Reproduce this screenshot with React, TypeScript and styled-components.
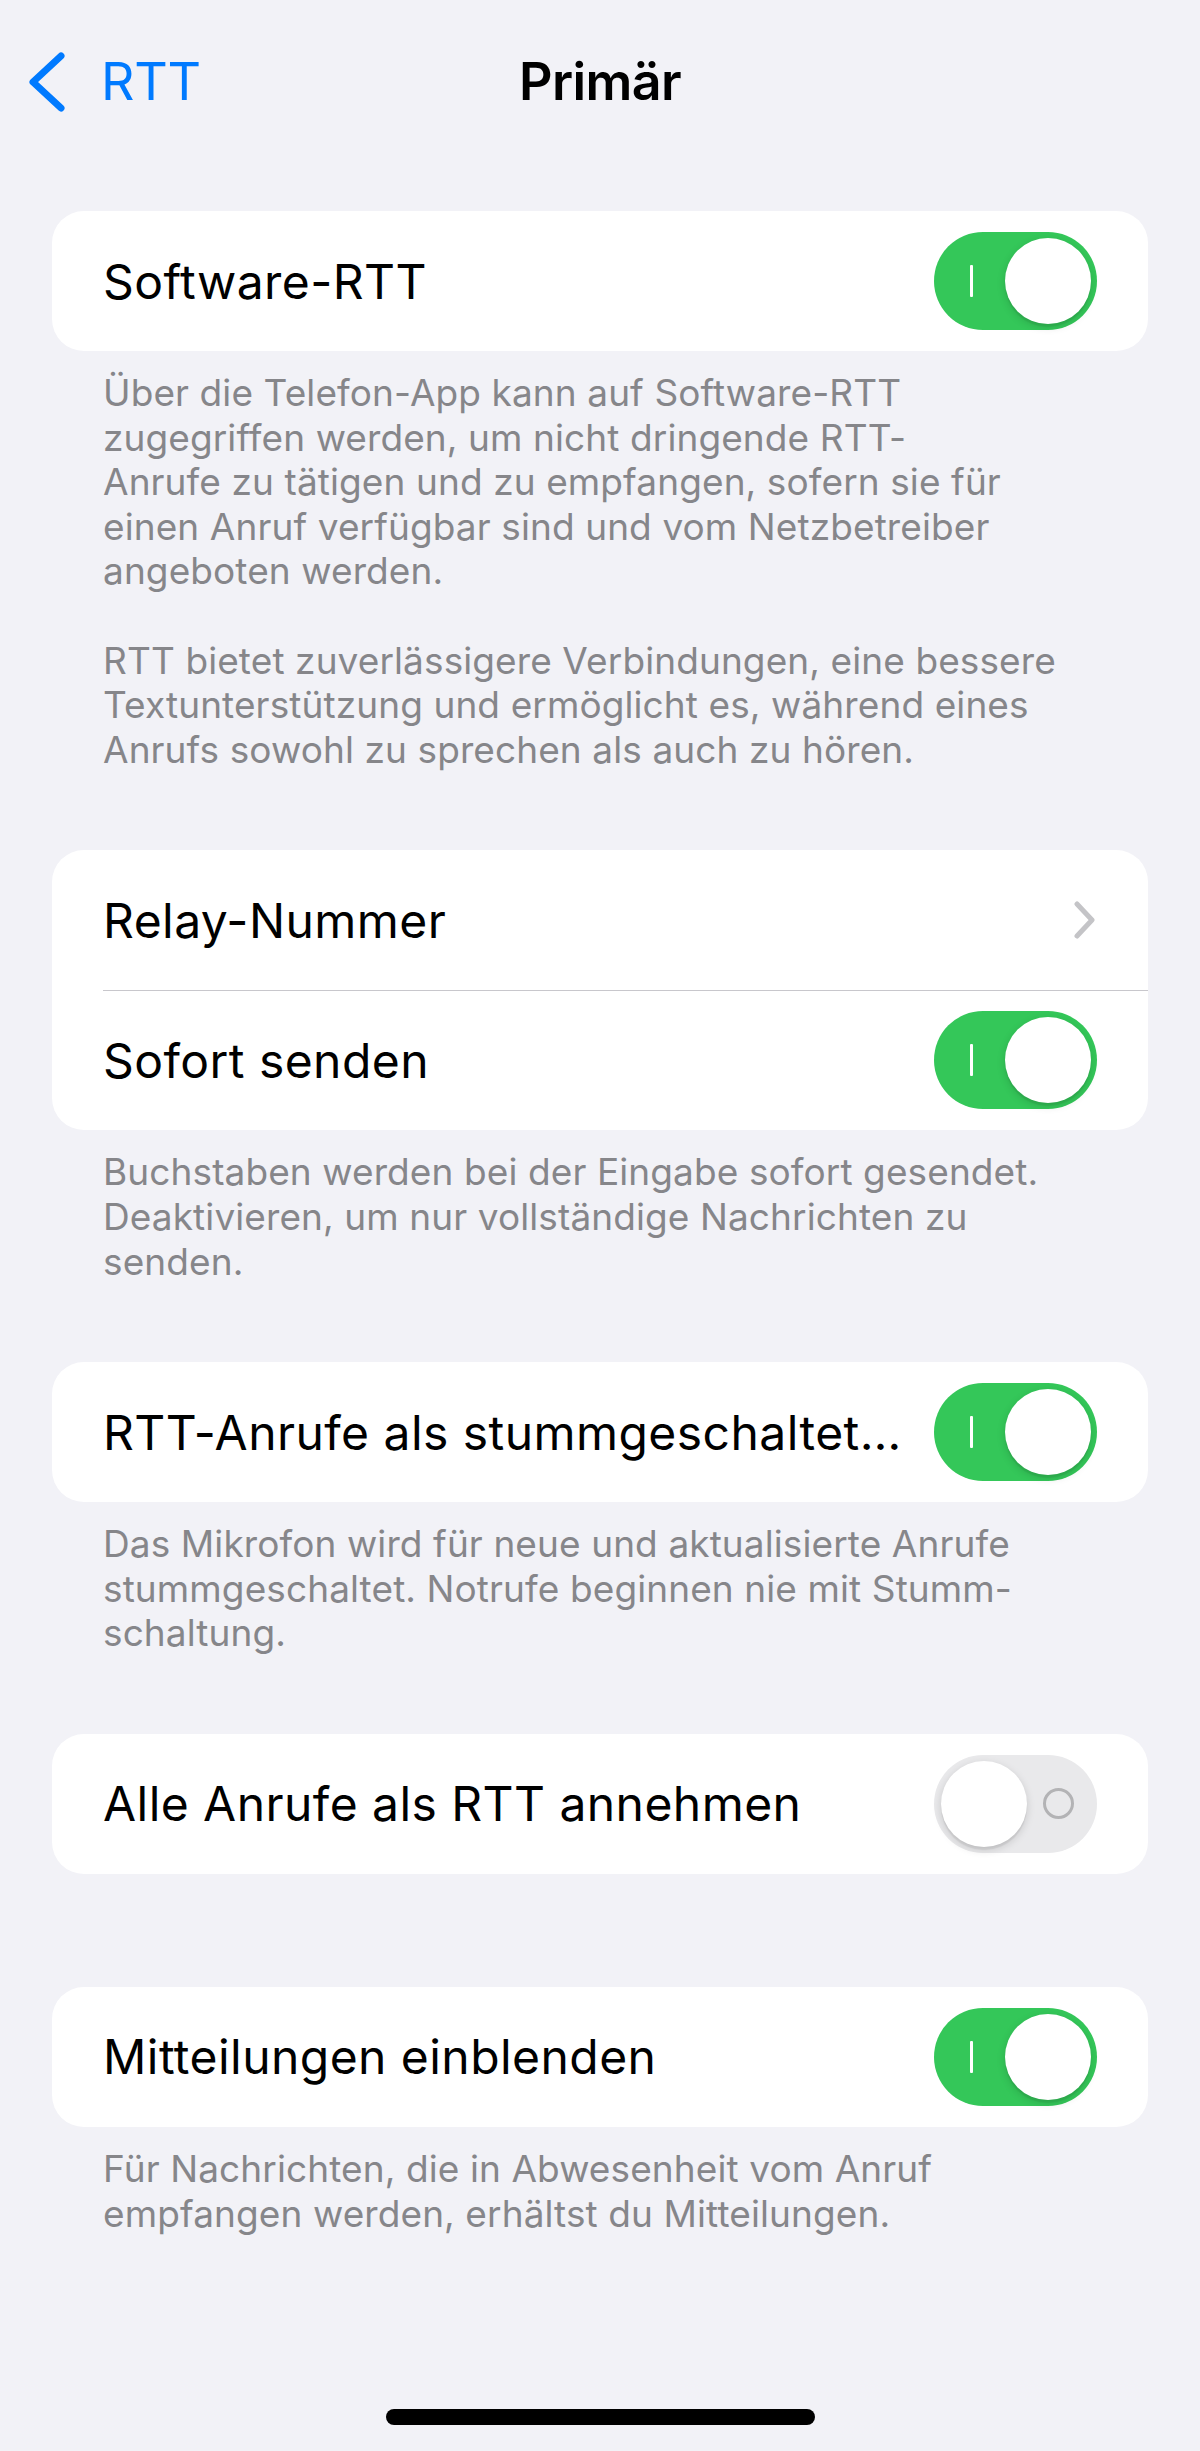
import React from "react";
import styled, { createGlobalStyle } from "styled-components";

const Global = createGlobalStyle`
  html, body { margin: 0; padding: 0; background: #f2f2f7; }
  body { font-family: Inter, "Noto Sans", "Liberation Sans", sans-serif; -webkit-font-smoothing: antialiased; }
  * { box-sizing: border-box; }
`;

const Page = styled.div`
  position: relative;
  min-height: 2451px;
  background: #f2f2f7;
  padding: 0 52px;
`;

const Nav = styled.header`
  height: 164px;
  display: grid;
  grid-template-columns: 1fr auto 1fr;
  align-items: center;
  margin: 0 -52px 47px;
`;

const Back = styled.button`
  justify-self: start;
  display: flex;
  align-items: center;
  gap: 33px;
  padding: 0 0 0 26px;
  border: 0;
  background: none;
  color: #007aff;
  font: 400 52px/1.21 Inter, sans-serif;
  letter-spacing: -0.3px;
`;

const Title = styled.h1`
  margin: 0;
  font: 600 52px/1.21 Inter, sans-serif;
  letter-spacing: -0.6px;
  color: #000;
`;

const Section = styled.section<{ $after: number }>`
  margin-bottom: ${(p) => p.$after}px;
`;

const Card = styled.div`
  background: #fff;
  border-radius: 32px;
  overflow: hidden;
`;

const Row = styled.div<{ $divider?: boolean }>`
  position: relative;
  height: 140px;
  display: flex;
  align-items: center;
  gap: 16px;
  padding: 0 51px;
  ${(p) =>
    p.$divider
      ? `&::before { content: ""; position: absolute; top: 0; left: 51px; right: 0; height: 1px; background: #c8c7cc; }`
      : ""}
`;

const Label = styled.span`
  flex: 1;
  min-width: 0;
  font-size: 48px;
  letter-spacing: 0.45px;
  color: #000;
  white-space: nowrap;
  overflow: hidden;
  text-overflow: ellipsis;
`;

const Footer = styled.p`
  margin: 0;
  padding: 20px 51px 0;
  font-size: 37px;
  line-height: 44.6px;
  letter-spacing: 0.1px;
  color: #86868a;
  white-space: pre-line;
`;

const Track = styled.div<{ $on: boolean }>`
  flex: none;
  width: 163px;
  height: 98px;
  border-radius: 49px;
  background: ${(p) => (p.$on ? "#34c759" : "#e9e9eb")};
  display: flex;
  align-items: center;
  justify-content: space-between;
  flex-direction: ${(p) => (p.$on ? "row" : "row-reverse")};
  padding: ${(p) => (p.$on ? "0 6px 0 36px" : "0 23px 0 7px")};
`;

const Knob = styled.div`
  width: 86px;
  height: 86px;
  border-radius: 50%;
  background: #fff;
  box-shadow: 0 3px 8px rgba(0, 0, 0, 0.15), 0 3px 1px rgba(0, 0, 0, 0.06);
`;

const OnMark = styled.span`
  width: 3px;
  height: 32px;
  background: #fff;
  border-radius: 1px;
`;

const OffMark = styled.span`
  width: 31px;
  height: 31px;
  border-radius: 50%;
  border: 3px solid #b3b3b5;
`;

const HomeIndicator = styled.div`
  position: absolute;
  left: 386px;
  bottom: 26px;
  width: 429px;
  height: 16px;
  border-radius: 8px;
  background: #000;
`;

const Toggle = ({ on }: { on: boolean }) => (
  <Track $on={on}>
    {on ? <OnMark /> : <OffMark />}
    <Knob />
  </Track>
);

const BackChevron = () => (
  <svg width="42" height="66" viewBox="0 0 42 66" fill="none">
    <path d="M35 7 L7 33 L35 59" stroke="#007aff" strokeWidth="7" strokeLinecap="round" strokeLinejoin="round" />
  </svg>
);

const Disclosure = () => (
  <svg width="24" height="38" viewBox="0 0 24 38" fill="none">
    <path d="M4 3 L19 19 L4 35" stroke="#c4c4c7" strokeWidth="5" strokeLinecap="round" strokeLinejoin="round" />
  </svg>
);

export default function App() {
  return (
    <>
      <Global />
      <Page>
        <Nav>
          <Back>
            <BackChevron />
            RTT
          </Back>
          <Title>Primär</Title>
          <span />
        </Nav>

        <Section $after={78}>
          <Card>
            <Row>
              <Label>Software-RTT</Label>
              <Toggle on />
            </Row>
          </Card>
          <Footer>
            {"Über die Telefon-App kann auf Software-RTT\nzugegriffen werden, um nicht dringende RTT-\nAnrufe zu tätigen und zu empfangen, sofern sie für\neinen Anruf verfügbar sind und vom Netzbetreiber\nangeboten werden.\n\nRTT bietet zuverlässigere Verbindungen, eine bessere\nTextunterstützung und ermöglicht es, während eines\nAnrufs sowohl zu sprechen als auch zu hören."}
          </Footer>
        </Section>

        <Section $after={78}>
          <Card>
            <Row>
              <Label>Relay-Nummer</Label>
              <Disclosure />
            </Row>
            <Row $divider>
              <Label>Sofort senden</Label>
              <Toggle on />
            </Row>
          </Card>
          <Footer>
            {"Buchstaben werden bei der Eingabe sofort gesendet.\nDeaktivieren, um nur vollständige Nachrichten zu\nsenden."}
          </Footer>
        </Section>

        <Section $after={78}>
          <Card>
            <Row>
              <Label>RTT-Anrufe als stummgeschaltet…</Label>
              <Toggle on />
            </Row>
          </Card>
          <Footer>
            {"Das Mikrofon wird für neue und aktualisierte Anrufe\nstummgeschaltet. Notrufe beginnen nie mit Stumm-\nschaltung."}
          </Footer>
        </Section>

        <Section $after={113}>
          <Card>
            <Row>
              <Label>Alle Anrufe als RTT annehmen</Label>
              <Toggle on={false} />
            </Row>
          </Card>
        </Section>

        <Section $after={0}>
          <Card>
            <Row>
              <Label>Mitteilungen einblenden</Label>
              <Toggle on />
            </Row>
          </Card>
          <Footer>
            {"Für Nachrichten, die in Abwesenheit vom Anruf\nempfangen werden, erhältst du Mitteilungen."}
          </Footer>
        </Section>

        <HomeIndicator />
      </Page>
    </>
  );
}
